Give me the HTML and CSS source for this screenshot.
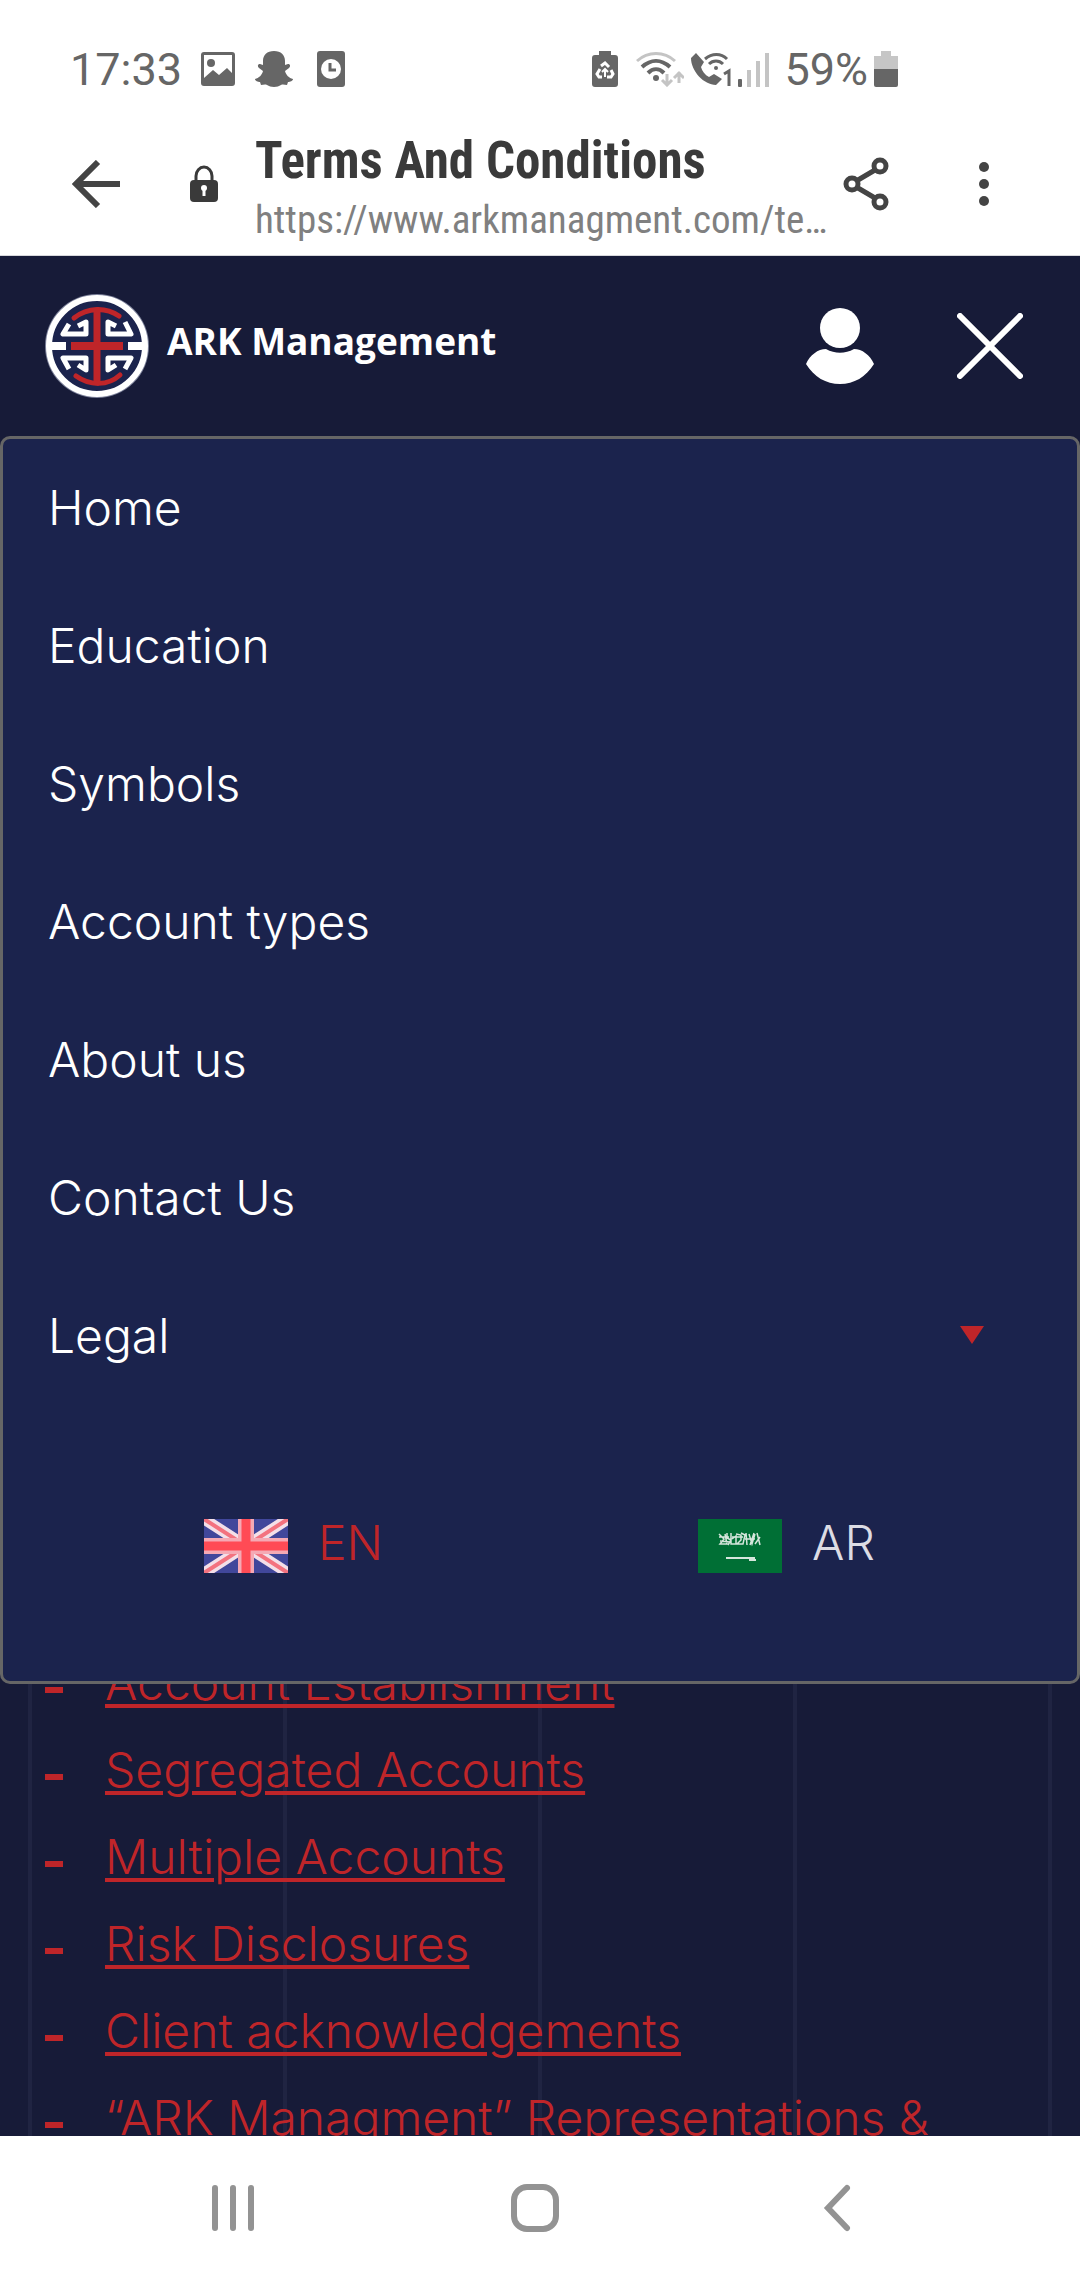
FILE: index.html
```html
<!DOCTYPE html>
<html lang="en">
<head>
    <meta charset="UTF-8">
    <meta name="viewport" content="width=device-width, initial-scale=1.0">
    <title>Terms And Conditions</title>
    <link rel="stylesheet" href="styles.css">
</head>
<body>
    <div class="status-bar">
        <div class="status-left">
            <span class="status-text">17:33</span>
            <svg width="36" height="36" viewBox="0 0 36 36"><path fill="#666" fill-rule="evenodd" d="M4 1h28a3 3 0 0 1 3 3v28a3 3 0 0 1-3 3H4a3 3 0 0 1-3-3V4a3 3 0 0 1 3-3zM4 4v23l9-8 6 5 8-7 5 5V4z"/><circle cx="11" cy="12" r="4" fill="#666"/></svg>
            <svg width="40" height="38" viewBox="0 0 40 38"><path fill="#666" d="M20 1c7 0 11 4 11 10v4l3-1c2 0 3 2 1 4l-4 3c1 4 4 7 8 8 0 2-3 3-5 3l-1 3c-2 0-4-1-6 0-2 1-4 2-7 2s-5-1-7-2c-2-1-4 0-6 0l-1-3c-2 0-5-1-5-3 4-1 7-4 8-8l-4-3c-2-2-1-4 1-4l3 1v-4C9 5 13 1 20 1z"/></svg>
            <svg class="icon-clock" width="30" height="36" viewBox="0 0 30 36"><rect x="1" width="28" height="36" rx="3" fill="#666"/><circle cx="15" cy="18" r="10" fill="#fff"/><path d="M14 12v7h6" fill="none" stroke="#666" stroke-width="3"/></svg>
        </div>
        <div class="status-right">
            <svg width="26" height="36" viewBox="0 0 26 36"><path fill="#666" d="M7 0h12v4h4a3 3 0 0 1 3 3v26a3 3 0 0 1-3 3H3a3 3 0 0 1-3-3V7a3 3 0 0 1 3-3h4z"/><path d="M9 15l4-3 4 4M19 19l2 4-2 3h-4M10 26H7l-2-3 3-5" fill="none" stroke="#fff" stroke-width="3"/><path d="M13 26v-8M10 21l3-3 3 3" fill="none" stroke="#fff" stroke-width="2"/></svg>
            <svg class="icon-wifi" width="48" height="36" viewBox="0 0 48 36"><g fill="none" stroke-width="3"><path stroke="#c4c4c4" d="M1 10c11-10 27-10 38 0"/><path stroke="#666" stroke-width="4" d="M6 16c9-8 19-8 28 0M12 22c5-5 11-5 16 0"/><path stroke="#c4c4c4" d="M31 23v11M26 29l5 5 5-5M43 32V21M38 27l5-5 5 5"/></g><circle cx="20" cy="27" r="3" fill="#666"/></svg>
            <svg width="42" height="36" viewBox="0 0 42 36"><path fill="#666" d="M6 2L1 7c0 13 13 27 25 27l6-6-8-5-5 3c-4-2-7-6-8-10l3-5z"/><g fill="none" stroke="#666" stroke-width="3"><path d="M15 8c7-6 16-6 22 0M19 13c4-4 10-4 14 0"/><path d="M34 23l5-3v15"/></g><circle cx="26" cy="17" r="2" fill="#666"/></svg>
            <svg class="icon-signal" width="32" height="36" viewBox="0 0 32 36"><rect y="28" width="4" height="8" rx="1" fill="#666"/><path fill="#c4c4c4" d="M9 19h4v17H9zM18 10h4v26h-4zM27 2h4v34h-4z"/></svg>
            <span class="status-text">59%</span>
            <svg width="24" height="36" viewBox="0 0 24 36"><path fill="#c6c6c6" d="M7 0h10v5h7v13H0V5h7z"/><path fill="#666" d="M0 18h24v16a2 2 0 0 1-2 2H2a2 2 0 0 1-2-2z"/></svg>
        </div>
    </div>

    <div class="address-bar">
        <button class="bar-button" aria-label="Back"><svg width="48" height="48" viewBox="0 0 48 48"><path d="M26 2L4 24l22 22M3 24h45" fill="none" stroke="#444" stroke-width="6"/></svg></button>
        <svg class="lock" width="28" height="38" viewBox="0 0 28 38"><path d="M6 17v-6a8 9 0 0 1 16 0v6" fill="none" stroke="#3a3a3a" stroke-width="3"/><rect y="15" width="28" height="22" rx="4" fill="#3a3a3a"/><circle cx="14" cy="23" r="3" fill="#fff"/><path d="M14 24v7" stroke="#fff" stroke-width="3"/></svg>
        <div class="page-info">
            <div class="page-title">Terms And Conditions</div>
            <div class="page-url">https://www.arkmanagment.com/te…</div>
        </div>
        <button class="bar-button share" aria-label="Share"><svg width="46" height="54" viewBox="0 0 46 54"><g fill="none" stroke="#444" stroke-width="5"><circle cx="9" cy="27" r="6"/><circle cx="37" cy="9" r="6"/><circle cx="37" cy="45" r="6"/><path d="M15 23l17-10M15 31l17 10"/></g></svg></button>
        <button class="bar-button" aria-label="More"><svg width="12" height="46" viewBox="0 0 12 46"><g fill="#444"><circle cx="6" cy="6" r="5"/><circle cx="6" cy="23" r="5"/><circle cx="6" cy="40" r="5"/></g></svg></button>
    </div>

    <div class="site">
        <div class="grid-lines"><span></span><span></span><span></span><span></span><span></span></div>

        <header class="header">
            <a href="#" class="logo">
                <svg width="104" height="104" viewBox="0 0 104 104">
                    <circle cx="52" cy="52" r="52" fill="#7d829b"/>
                    <circle cx="52" cy="52" r="48" fill="#1b234d" stroke="#fff" stroke-width="6"/>
                    <path d="M3 52h18M83 52h18" stroke="#fff" stroke-width="8"/>
                    <g fill="none" stroke="#fff" stroke-width="5" stroke-linejoin="round">
                        <path d="M24 30l-6 10h23V28l-8 4"/>
                        <path d="M80 28l6 12H63V28l8 4"/>
                        <path d="M24 75l-6-11h23v12l-8-5"/>
                        <path d="M80 75l6-11H63v12l8-5"/>
                    </g>
                    <g fill="none" stroke="#bf2529" stroke-linecap="round">
                        <path stroke-width="7" d="M52 18v68"/>
                        <path stroke-width="8" stroke-linecap="butt" d="M26 52h52"/>
                        <path stroke-width="5" d="M29 24c14-11 32-11 45-2M31 82c14 10 32 10 44-1"/>
                    </g>
                </svg>
                <span class="logo-text">ARK Management</span>
            </a>
            <div class="header-buttons">
                <button class="bar-button" aria-label="Account"><svg width="68" height="76" viewBox="0 0 68 76"><circle cx="34" cy="20" r="20" fill="#fff"/><path fill="#fff" d="M20 41c9 5 19 5 28 0 8 0 16 6 20 15-8 13-20 20-34 20S8 69 0 56c4-9 12-15 20-15z"/></svg></button>
                <button class="bar-button" aria-label="Close menu"><svg width="66" height="66" viewBox="0 0 66 66"><path d="M3 3l60 60M63 3L3 63" stroke="#fff" stroke-width="6" stroke-linecap="round"/></svg></button>
            </div>
        </header>

        <nav class="menu">
            <a href="#" class="menu-item">Home</a>
            <a href="#" class="menu-item">Education</a>
            <a href="#" class="menu-item">Symbols</a>
            <a href="#" class="menu-item">Account types</a>
            <a href="#" class="menu-item">About us</a>
            <a href="#" class="menu-item">Contact Us</a>
            <a href="#" class="menu-item">Legal <span class="arrow"></span></a>
            <div class="languages">
                <a href="#" class="language active">
                    <svg width="84" height="54" viewBox="0 0 84 54">
                        <path fill="#41479b" d="M0 0h84v54H0z"/>
                        <path d="M0 0l84 54M84 0L0 54" stroke="#f3dfe8" stroke-width="11"/>
                        <path d="M0 0l84 54M84 0L0 54" stroke="#f3727f" stroke-width="4"/>
                        <path d="M42 0v54M0 27h84" stroke="#f5a9b4" stroke-width="16"/>
                        <path d="M42 0v54M0 27h84" stroke="#ff4b55" stroke-width="9"/>
                    </svg>
                    <span class="language-name">EN</span>
                </a>
                <a href="#" class="language">
                    <svg width="84" height="54" viewBox="0 0 84 54">
                        <path fill="#006f35" d="M0 0h84v54H0z"/>
                        <g fill="none" stroke="#d5e6dc" stroke-width="1.5">
                            <path d="M21 15l5 5-4 5h7l-2-10M29 14v5l4 2-3 5M33 14v11h5v-8l-4 3M38 15l5 1v5l-4 4h6l2-9-4-2M48 14l1 12M51 15l3 10 3-10M56 14l-4 12M59 14l3 12M62 18l-5 7M21 18h10M34 18h11M22 22l10 1M47 20h10"/>
                            <path stroke-width="2" d="M28 39h29M52 38v3h6"/>
                        </g>
                    </svg>
                    <span class="language-name">AR</span>
                </a>
            </div>
        </nav>

        <ul class="terms">
            <li><a href="#">Account Establishment</a></li>
            <li><a href="#">Segregated Accounts</a></li>
            <li><a href="#">Multiple Accounts</a></li>
            <li><a href="#">Risk Disclosures</a></li>
            <li><a href="#">Client acknowledgements</a></li>
            <li><a href="#">“ARK Managment” Representations &amp;</a></li>
        </ul>
    </div>

    <div class="phone-nav">
        <button class="bar-button" aria-label="Recent apps"><svg width="44" height="48" viewBox="0 0 44 48"><path d="M4 4v40M22 4v40M40 4v40" stroke="#939393" stroke-width="6" stroke-linecap="round"/></svg></button>
        <button class="bar-button" aria-label="Home screen"><svg width="50" height="50" viewBox="0 0 50 50"><rect x="4" y="4" width="42" height="42" rx="13" fill="none" stroke="#939393" stroke-width="6"/></svg></button>
        <button class="bar-button" aria-label="Go back"><svg width="28" height="48" viewBox="0 0 28 48"><path d="M24 4L5 24l19 20" fill="none" stroke="#939393" stroke-width="6" stroke-linecap="round"/></svg></button>
    </div>
</body>
</html>
```

FILE: styles.css
```css
* {
    box-sizing: border-box;
}

body {
    display: flex;
    flex-direction: column;
    height: 100vh;
    margin: 0;
    overflow: hidden;
    background-color: #fff;
    font-family: 'Inter', sans-serif;
    font-weight: 300;
}

a {
    color: inherit;
    text-decoration: none;
}

svg {
    display: block;
    flex-shrink: 0;
}

.bar-button {
    display: flex;
    align-items: center;
    justify-content: center;
    padding: 0;
    border: none;
    background: none;
    cursor: pointer;
}

/* status bar */
.status-bar {
    display: flex;
    justify-content: space-between;
    height: 112px;
    padding: 26px 182px 0 70px;
    font-family: 'Roboto', sans-serif;
    font-size: 45px;
    font-weight: 400;
    color: #666;
}

.status-left,
.status-right {
    display: flex;
    align-items: center;
}

.status-left {
    gap: 18px;
}

.status-right {
    gap: 6px;
}

.icon-clock {
    margin-left: 4px;
}

.icon-wifi {
    margin-left: 12px;
}

.icon-signal {
    margin-right: 8px;
}

/* address bar */
.address-bar {
    display: flex;
    align-items: center;
    height: 144px;
    padding: 0 90px 0 72px;
    border-bottom: 1px solid #d8d8dc;
}

.lock {
    margin: 0 37px 0 70px;
}

.page-info {
    flex: 1;
    min-width: 0;
    padding-top: 8px;
    font-family: 'Roboto Condensed', 'Liberation Sans Narrow', 'Roboto', sans-serif;
    white-space: nowrap;
}

.page-title {
    font-size: 51px;
    line-height: 64px;
    font-weight: 700;
    color: #3a3a3a;
}

.page-url {
    font-size: 39px;
    line-height: 54px;
    font-weight: 400;
    color: #808080;
}

.share {
    margin-right: 89px;
}

/* site */
.site {
    position: relative;
    z-index: 0;
    flex: 1;
    min-height: 0;
    overflow: hidden;
    background-color: #171b38;
}

.grid-lines {
    position: absolute;
    z-index: -2;
    top: 180px;
    bottom: 0;
    left: 28px;
    right: 28px;
    display: flex;
    justify-content: space-between;
}

.grid-lines span {
    width: 4px;
    background-color: #202442;
}

.header {
    display: flex;
    align-items: center;
    justify-content: space-between;
    height: 180px;
    padding: 0 57px 0 45px;
}

.logo {
    display: flex;
    align-items: center;
    gap: 18px;
}

.logo-text {
    padding-bottom: 12px;
    font-family: 'Open Sans', 'Noto Sans', sans-serif;
    font-size: 37px;
    font-weight: 700;
    color: #fff;
}

.header-buttons {
    display: flex;
    align-items: center;
    gap: 83px;
}

.menu {
    position: relative;
    border: 3px solid #666;
    border-radius: 10px;
    background-color: #1b234d;
    font-size: 48px;
    color: #fff;
}

.menu-item {
    display: flex;
    align-items: center;
    justify-content: space-between;
    height: 138px;
    padding: 0 93px 2px 45px;
}

.arrow {
    border-top: 18px solid #bf2529;
    border-left: 12px solid transparent;
    border-right: 12px solid transparent;
}

.languages {
    display: flex;
    height: 276px;
    padding: 6px 44px 0;
}

.language {
    flex: 1;
    display: flex;
    align-items: center;
    justify-content: center;
    gap: 30px;
    color: #dcdce4;
}

.language.active {
    color: #bf2529;
}

.language-name {
    padding-bottom: 8px;
}

/* the list runs on under the open menu */
.terms {
    position: relative;
    z-index: -1;
    margin: -45px 0 0;
    padding: 0 45px;
    list-style: none;
    font-size: 48px;
    line-height: 87px;
    color: #bf2529;
    white-space: nowrap;
}

.terms li {
    display: flex;
    align-items: center;
    gap: 42px;
}

.terms li::before {
    content: '';
    width: 18px;
    height: 6px;
    margin-top: 14px;
    background-color: #bf2529;
}

.terms a {
    text-decoration: underline;
    text-decoration-thickness: 4px;
    text-underline-offset: 4px;
}

/* phone buttons */
.phone-nav {
    display: grid;
    grid-template-columns: repeat(3, 1fr);
    height: 144px;
    padding: 0 92px 0 82px;
}
```
